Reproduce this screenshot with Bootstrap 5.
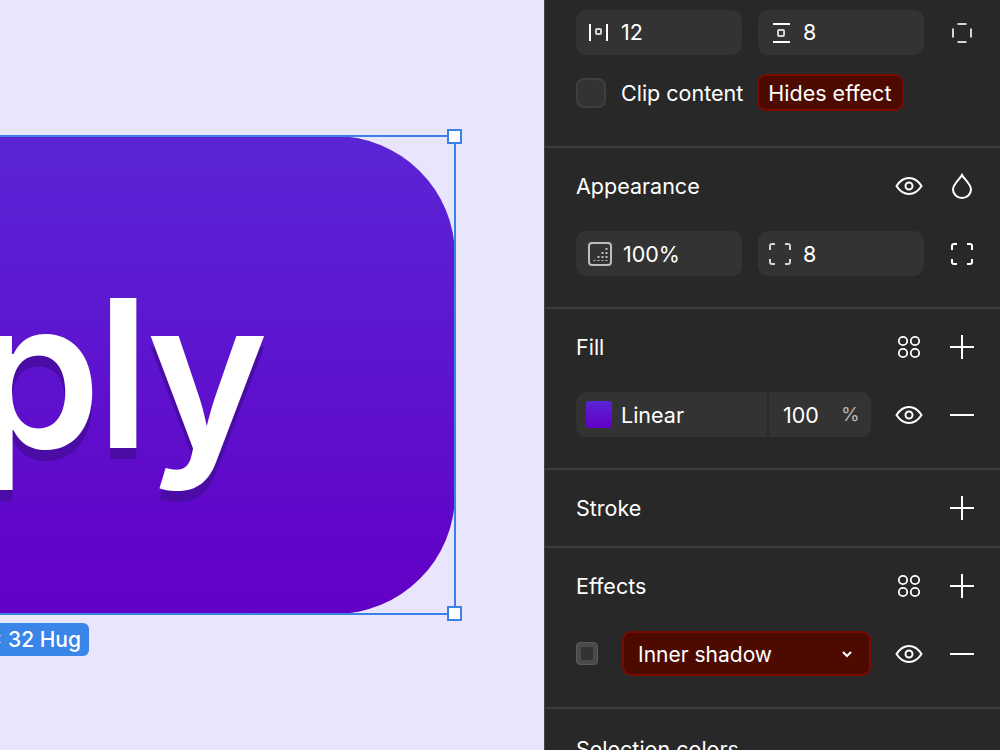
<!DOCTYPE html>
<html lang="en">
<head>
  <meta charset="UTF-8" />
  <title>Apply button</title>
  <link href="https://cdn.jsdelivr.net/npm/bootstrap@5.3.2/dist/css/bootstrap.min.css" rel="stylesheet">
  <style>
    html, body { height: 100%; overflow: hidden; }
    body { font-family: Inter, "Liberation Sans", sans-serif; background: #282828; }
    .stage { width: 1000px; height: 750px; }

    /* canvas */
    .canvas-area { width: 544px; height: 750px; background: #e9e5fc; overflow: hidden; flex: none; }
    .frame-shape { left: -400px; top: 136px; width: 855px; height: 478px; border-radius: 120px; background: linear-gradient(180deg, #5a25d5 0%, #6200c6 100%); }
    .frame-text { right: 281px; top: 252px; font-size: 206px; line-height: 242px; font-weight: 600; color: #fff; text-shadow: 0 11px 0 #4b0ca6; white-space: nowrap; letter-spacing: -5px; }
    .sel-box { left: -400px; top: 135px; width: 856px; height: 480px; border: 2px solid #3b82e6; }
    .sel-handle { width: 15px; height: 15px; right: -8px; background: #fff; border: 2px solid #3b82e6; }
    .sel-handle.h-top { top: -8px; }
    .sel-handle.h-bottom { bottom: -8px; }
    .size-tag { right: 455px; top: 623px; height: 33px; padding: 0 8px; background: #3a85e8; color: #fff; border-radius: 6px; font-size: 21px; font-weight: 500; line-height: 33px; white-space: nowrap; }

    /* right panel */
    .side-pane { width: 456px; height: 750px; background: #282828; color: #fff; font-size: 21.5px; border-left: 1px solid #444; overflow: hidden; flex: none; }
    .side-pane span { padding-top: 2px; }
    .side-pane .sec-head span { padding-top: 0; margin-top: -1px; }
    .side-pane .sec-top .field-num { padding-top: 0; }
    .pane-sec { padding: 16px 19px 16px 31px; border-bottom: 2px solid #3d3d3d; }
    .pane-sec.sec-top { padding-top: 10px; height: 148px; }
    .sec-head { height: 44px; }
    .sec-head > span { position: relative; top: 1px; }
    .sec-row { margin-top: 23px; margin-bottom: 15px; height: 45px; }
    .sec-top .sec-row { margin: 0; }
    .sec-top .clip-row { margin-top: 19px; height: 37px; }
    .tool-ico { width: 38px; height: 38px; flex: none; }
    .tool-ico + .tool-ico { margin-left: 15px; }
    .field-box { width: 166px; height: 45px; background: #333; border-radius: 10px; padding-left: 12px; }
    .field-box + .field-box { margin-left: 16px; }
    .field-num { margin-left: 11px; }
    .corner-ico { margin-left: -2px; }
    .fill-field { width: 295px; height: 45px; background: #333; border-radius: 10px; padding-left: 10px; }
    .fill-swatch { width: 26px; height: 27px; border-radius: 3px; background: linear-gradient(180deg, #5a25d5, #6200c6); }
    .fill-name { margin-left: 9px; }
    .fill-split { width: 2px; height: 41px; background: #282828; margin-left: auto; }
    .fill-pct { width: 102px; flex: none; padding-left: 14px; }
    .fill-unit { color: #b5b5b5; font-size: 19px; margin-left: 22px; }
    .clip-check { width: 30px; height: 30px; background: #333; border: 2px solid #3f3f3f; border-radius: 8px; }
    .clip-name { margin-left: 15px; }
    .warn-tag { background: #4d0a00; border: 2px solid #7a0b00; border-radius: 9px; color: #fff; }
    .warn-clip { height: 37px; padding: 0 11px 0 9px; margin-left: 14px; }
    .fx-check { width: 22px; height: 23px; background: #4a4a4a; border: 1px solid #5a5a5a; border-radius: 4px; padding: 4px; }
    .fx-check span { width: 100%; height: 100%; padding: 0; background: #333; border-radius: 1px; }
    .fx-select { width: 249px; height: 45px; margin-left: 24px; padding: 0 16px 0 14px; font-size: 21px; }
    .sec-title-cut { padding: 24px 31px; }
    svg { display: block; }
    .s-line { fill: none; stroke: #fff; stroke-width: 2; }
    .s-soft { fill: none; stroke: #d4d4d4; stroke-width: 2; }
    .s-dots { fill: none; stroke: #fff; stroke-width: 1.800; }
  </style>
</head>
<body>
  <div class="stage d-flex">
    <div class="canvas-area position-relative">
      <div class="frame-shape position-absolute"></div>
      <div class="frame-text position-absolute">Apply</div>
      <div class="sel-box position-absolute">
        <div class="sel-handle h-top position-absolute"></div>
        <div class="sel-handle h-bottom position-absolute"></div>
      </div>
      <div class="size-tag position-absolute">Hug × 32 Hug</div>
    </div>

    <div class="side-pane">
      <div class="pane-sec sec-top">
        <div class="sec-row d-flex align-items-center">
          <div class="field-box d-flex align-items-center">
            <svg width="22" height="22" viewBox="0 0 22 22"><path class="s-line" d="M2 2v17M19 2v17"/><rect class="s-soft" x="8" y="7" width="5" height="5" rx="1"/></svg>
            <span class="field-num">12</span>
          </div>
          <div class="field-box d-flex align-items-center">
            <svg width="22" height="22" viewBox="0 0 22 22"><path class="s-line" d="M3 2h17M3 20h17"/><rect class="s-soft" x="8" y="8" width="6" height="6" rx="1"/></svg>
            <span class="field-num">8</span>
          </div>
          <div class="tool-ico d-flex align-items-center justify-content-center ms-auto">
            <svg width="22" height="22" viewBox="0 0 22 22"><path class="s-soft" d="M6.500 2h9M6.500 20h9M2 6.500v9M20 6.500v9"/></svg>
          </div>
        </div>
        <div class="clip-row sec-row d-flex align-items-center">
          <div class="clip-check"></div>
          <span class="clip-name">Clip content</span>
          <div class="warn-tag warn-clip d-flex align-items-center"><span>Hides effect</span></div>
        </div>
      </div>

      <div class="pane-sec">
        <div class="sec-head d-flex align-items-center justify-content-between">
          <span>Appearance</span>
          <div class="d-flex">
            <div class="tool-ico d-flex align-items-center justify-content-center">
              <svg width="28" height="20" viewBox="0 0 28 20"><path class="s-line" d="M1.500 10C5 4.500 9 2 14 2s9 2.500 12.500 8C23 15.500 19 18 14 18S5 15.500 1.500 10Z"/><circle class="s-line" cx="14" cy="10" r="3.500"/></svg>
            </div>
            <div class="tool-ico d-flex align-items-center justify-content-center">
              <svg width="22" height="26" viewBox="0 0 22 26"><path class="s-line" d="M11 2c2 4 9 9 9 14.500a9 8.500 0 0 1-18 0C2 11 9 6 11 2Z"/></svg>
            </div>
          </div>
        </div>
        <div class="sec-row d-flex align-items-center">
          <div class="field-box d-flex align-items-center">
            <svg width="24" height="24" viewBox="0 0 24 24"><rect x="1" y="1" width="22" height="22" rx="3" fill="none" stroke="#bdbdbd" stroke-width="2"/><path d="M18.500 6v13M14.500 10v9M10.500 14v5M6.500 18v1" fill="none" stroke="#bdbdbd" stroke-width="2" stroke-dasharray="2 2"/></svg>
            <span class="field-num">100%</span>
          </div>
          <div class="field-box d-flex align-items-center">
            <svg width="24" height="24" viewBox="0 0 24 24" class="corner-ico"><path class="s-soft" d="M2 8V4a2 2 0 0 1 2-2h3M17 2h3a2 2 0 0 1 2 2v4M22 17v3a2 2 0 0 1-2 2h-3M7 22H4a2 2 0 0 1-2-2v-3"/></svg>
            <span class="field-num">8</span>
          </div>
          <div class="tool-ico d-flex align-items-center justify-content-center ms-auto">
            <svg width="24" height="24" viewBox="0 0 24 24"><path class="s-line" d="M2 8V4a2 2 0 0 1 2-2h3M17 2h3a2 2 0 0 1 2 2v4M22 17v3a2 2 0 0 1-2 2h-3M7 22H4a2 2 0 0 1-2-2v-3"/></svg>
          </div>
        </div>
      </div>

      <div class="pane-sec">
        <div class="sec-head d-flex align-items-center justify-content-between">
          <span>Fill</span>
          <div class="d-flex">
            <div class="tool-ico d-flex align-items-center justify-content-center">
              <svg width="24" height="24" viewBox="0 0 24 24"><circle class="s-dots" cx="6" cy="6" r="4.200"/><circle class="s-dots" cx="18" cy="6" r="4.200"/><circle class="s-dots" cx="6" cy="18" r="4.200"/><circle class="s-dots" cx="18" cy="18" r="4.200"/></svg>
            </div>
            <div class="tool-ico d-flex align-items-center justify-content-center">
              <svg width="24" height="24" viewBox="0 0 24 24"><path class="s-line" d="M12 0v24M0 12h24"/></svg>
            </div>
          </div>
        </div>
        <div class="sec-row d-flex align-items-center">
          <div class="fill-field d-flex align-items-center">
            <div class="fill-swatch"></div>
            <span class="fill-name">Linear</span>
            <div class="fill-split"></div>
            <div class="fill-pct d-flex align-items-center"><span>100</span><span class="fill-unit">%</span></div>
          </div>
          <div class="d-flex ms-auto">
            <div class="tool-ico d-flex align-items-center justify-content-center">
              <svg width="28" height="20" viewBox="0 0 28 20"><path class="s-line" d="M1.500 10C5 4.500 9 2 14 2s9 2.500 12.500 8C23 15.500 19 18 14 18S5 15.500 1.500 10Z"/><circle class="s-line" cx="14" cy="10" r="3.500"/></svg>
            </div>
            <div class="tool-ico d-flex align-items-center justify-content-center">
              <svg width="24" height="24" viewBox="0 0 24 24"><path class="s-line" d="M0 12h24"/></svg>
            </div>
          </div>
        </div>
      </div>

      <div class="pane-sec">
        <div class="sec-head d-flex align-items-center justify-content-between">
          <span>Stroke</span>
          <div class="tool-ico d-flex align-items-center justify-content-center">
            <svg width="24" height="24" viewBox="0 0 24 24"><path class="s-line" d="M12 0v24M0 12h24"/></svg>
          </div>
        </div>
      </div>

      <div class="pane-sec">
        <div class="sec-head d-flex align-items-center justify-content-between">
          <span>Effects</span>
          <div class="d-flex">
            <div class="tool-ico d-flex align-items-center justify-content-center">
              <svg width="24" height="24" viewBox="0 0 24 24"><circle class="s-dots" cx="6" cy="6" r="4.200"/><circle class="s-dots" cx="18" cy="6" r="4.200"/><circle class="s-dots" cx="6" cy="18" r="4.200"/><circle class="s-dots" cx="18" cy="18" r="4.200"/></svg>
            </div>
            <div class="tool-ico d-flex align-items-center justify-content-center">
              <svg width="24" height="24" viewBox="0 0 24 24"><path class="s-line" d="M12 0v24M0 12h24"/></svg>
            </div>
          </div>
        </div>
        <div class="sec-row d-flex align-items-center">
          <div class="fx-check d-flex"><span></span></div>
          <div class="warn-tag fx-select d-flex align-items-center justify-content-between">
            <span>Inner shadow</span>
            <svg width="12" height="8" viewBox="0 0 12 8"><path class="s-line" d="M2 2l4 4 4-4"/></svg>
          </div>
          <div class="d-flex ms-auto">
            <div class="tool-ico d-flex align-items-center justify-content-center">
              <svg width="28" height="20" viewBox="0 0 28 20"><path class="s-line" d="M1.500 10C5 4.500 9 2 14 2s9 2.500 12.500 8C23 15.500 19 18 14 18S5 15.500 1.500 10Z"/><circle class="s-line" cx="14" cy="10" r="3.500"/></svg>
            </div>
            <div class="tool-ico d-flex align-items-center justify-content-center">
              <svg width="24" height="24" viewBox="0 0 24 24"><path class="s-line" d="M0 12h24"/></svg>
            </div>
          </div>
        </div>
      </div>

      <div class="sec-title-cut">Selection colors</div>
    </div>
  </div>
  <script src="https://cdn.jsdelivr.net/npm/bootstrap@5.3.2/dist/js/bootstrap.bundle.min.js"></script>
</body>
</html>
